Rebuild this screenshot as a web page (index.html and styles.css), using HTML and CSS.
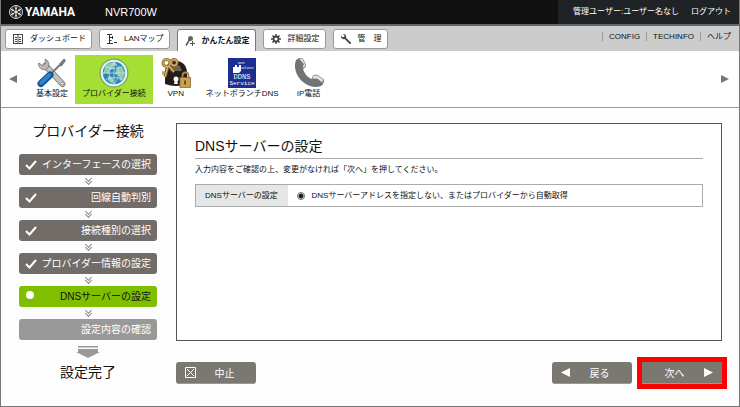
FILE: index.html
```html
<!DOCTYPE html>
<html lang="ja">
<head>
  <meta charset="UTF-8">
  <meta name="viewport" content="width=device-width, initial-scale=1.0">
  <title>NVR700W - プロバイダー接続</title>
  <link rel="stylesheet" href="styles.css">
</head>
<body>

  <!-- ヘッダー -->
  <header class="header">
    <div class="brand">
      <svg class="brand-mark" viewBox="0 0 26 26" fill="none" stroke="#fff">
        <circle cx="13" cy="13" r="12" stroke-width="1.6"/>
        <g stroke-width="1.8">
          <path d="M13 2v22M3.5 7.5l19 11M22.5 7.5l-19 11"/>
          <path d="M10 4.500l3 3 3-3M10 21.500l3-3 3 3M4 11.500l4-1.200-1-4M22 14.500l-4 1.200 1 4M22 11.500l-4-1.200 1-4M4 14.500l4 1.200-1 4" stroke-width="1.4"/>
        </g>
      </svg>
      <span class="brand-name">YAMAHA</span>
      <span class="model">NVR700W</span>
    </div>
    <div class="user">
      <span>管理ユーザー:ユーザー名なし</span>
      <a href="#">ログアウト</a>
    </div>
  </header>

  <!-- タブ -->
  <div class="tabbar">
    <nav class="tabs">
      <a class="tab" href="#">
        <svg viewBox="0 0 10 10" fill="none" stroke="#444"><path d="M0 .5h10M.5 1v8.500M9.500 1v8.500M0 9.500h10M5 1v8"/><path d="M2 3.500h2M2 5.500h2M2 7.500h2M6 3.500h2M6 5.500h2M6 7.500h2"/></svg>
        ダッシュボード
      </a>
      <a class="tab" href="#">
        <svg viewBox="0 0 10 10" fill="none" stroke="#333"><path d="M0 .5h5M2.500 .5v9M0 9.500h6M2.500 3.500h3M2.500 6.500h2M5.500 2v3M7 8.500h3"/></svg>
        LANマップ
      </a>
      <a class="tab active" href="#">
        <svg viewBox="0 0 10 10" fill="none" stroke="#555"><circle cx="5.500" cy="2.500" r="2.500" fill="#666" stroke="none"/><path d="M5 3L1 9.500" stroke-width="1.500"/><path d="M7.500 5v5M5 7.500h5"/></svg>
        かんたん設定
      </a>
      <a class="tab" href="#">
        <svg viewBox="0 0 10 10" fill="none" stroke="#444"><circle cx="5" cy="5" r="2.500" stroke-width="1.800"/><path d="M5 0v2M5 8v2M0 5h2M8 5h2M1.500 1.500l1.400 1.400M7.100 7.100l1.400 1.400M8.500 1.500L7.100 2.900M2.900 7.100L1.500 8.500" stroke-width="1.500"/></svg>
        詳細設定
      </a>
      <a class="tab" href="#">
        <svg viewBox="0 0 10 10" fill="#444"><path d="M1.800 0A2.800 2.800 0 0 1 5 3.700L9.800 8.400a1 1 0 0 1-1.400 1.400L3.700 5A2.800 2.800 0 0 1 0 1.800L1.700 3.300 3.200 2.900 3.500 1.500z"/></svg>
        管　理
      </a>
    </nav>
    <nav class="links">
      <a href="#">CONFIG</a>
      <a href="#">TECHINFO</a>
      <a href="#">ヘルプ</a>
    </nav>
  </div>

  <!-- アイコンメニュー -->
  <nav class="menu">
    <button class="arrow" aria-label="前へ"><svg viewBox="0 0 8 8" fill="#777"><path d="M8 0v8L0 4z"/></svg></button>
    <div class="menu-items">
      <a class="menu-item" href="#">
        <svg viewBox="0 0 30 30">
          <path d="M8.500 7.500L25.500 26" stroke="#777" stroke-width="6" stroke-linecap="round"/>
          <path d="M8.500 7.500L25.500 26" stroke="#c2c2c2" stroke-width="4.400" stroke-linecap="round"/>
          <path d="M1.500 5A6 6 0 0 0 9.500 11.500 6 6 0 0 0 8 1L8.500 5.500 5.500 7.500z" fill="#b8b8b8" stroke="#777" stroke-width=".8"/>
          <circle cx="25" cy="25.500" r="1.400" fill="#fff" stroke="#777" stroke-width=".7"/>
          <path d="M14 15.500L24 6" stroke="#777" stroke-width="2"/>
          <path d="M22 6l5-5.500 2 2L24.500 8.500z" fill="#777"/>
          <path d="M4 25.500l9-8.500" stroke="#174f8d" stroke-width="7" stroke-linecap="round"/>
          <path d="M4 25l8.500-8" stroke="#2b83cf" stroke-width="4" stroke-linecap="round"/>
        </svg>
        基本設定
      </a>
      <a class="menu-item current" href="#">
        <svg viewBox="0 0 30 30">
          <circle cx="15" cy="15" r="14.500" fill="#78a35f"/>
          <circle cx="15" cy="15" r="13.300" fill="#e4f3f4"/>
          <circle cx="15" cy="15" r="11.200" fill="#2d86b8"/>
          <path d="M6 9c2-4 6-5 10-5l2 3-3 1-1 3-3 1-1 4-4-1-2 2zM17 12l3-4 4 2 2 5-2 6-3 2-1-5-4-2zM9 18l4 1 2 3-2 3.500-4-3z" fill="#8fcbb1"/>
          <path d="M15 4v22M4 15h22M6.500 8.500q8.500 4 17 0M6.500 21.500q8.500-4 17 0M15 4q-10 11 0 22M15 4q10 11 0 22" fill="none" stroke="#c5e6ef" stroke-width=".7"/>
        </svg>
        プロバイダー接続
      </a>
      <a class="menu-item" href="#">
        <svg viewBox="0 0 30 30">
          <path d="M4 26V15C4 6 9 3 15 3s11 4 11 12v11q-11 4-22 0z" fill="#241c1b"/>
          <path d="M11 8q4-2 8 0l2 5H9z" fill="#706056"/>
          <circle cx="15" cy="21" r="2.500" fill="#fff"/><path d="M14 22h2l1 4h-4z" fill="#fff"/>
          <g fill="none" stroke="#8a6a2b" stroke-width="3"><circle cx="5.500" cy="5" r="3.500"/><circle cx="13" cy="4.500" r="3"/><path d="M8 8l5 6M7 8L4 19M4 15H1"/></g>
          <g fill="none" stroke="#d3b264" stroke-width="1.300"><circle cx="5.500" cy="5" r="3.500"/><circle cx="13" cy="4.500" r="3"/><path d="M8 8l5 6M7 8L4 19M4 15H1"/></g>
          <path d="M21.500 20v-2.500a3 3 0 0 1 6 0V20" fill="none" stroke="#a98b4c" stroke-width="1.800"/>
          <rect x="19" y="19.500" width="10.500" height="10" fill="#c9a24e" stroke="#8d6b2b" stroke-width=".8"/>
          <path d="M24 22.500v4" stroke="#433017" stroke-width="1.500"/>
        </svg>
        VPN
      </a>
      <a class="menu-item" href="#">
        <svg class="ddns" viewBox="0 0 30 30" fill="#fff">
          <rect x="1" width="28" height="30" fill="#1c2f91"/>
          <path d="M6 9h2V7h2v2h2v-2h2v6l-2 2H6z"/>
          <text x="11" y="6" font-size="4">Net</text>
          <text x="14" y="11" font-size="3">Volante</text>
          <text x="15" y="21" font-size="7" text-anchor="middle">DDNS</text>
          <text x="15" y="27" font-size="6" text-anchor="middle">Service</text>
        </svg>
        ネットボランチDNS
      </a>
      <a class="menu-item" href="#">
        <svg viewBox="0 0 30 30">
          <path d="M2 2C-1 10 3 19 9 24c6 5 13 6 18 4 2-1 3-4 3-6l-7-5c-2 0-4 1-5 4-4-1-8-6-9-10 2-1 3-3 2-5L7 0Q4 0 2 2z" fill="#707476"/>
          <path d="M5 1l3-1 3.500 6-.5 3.500L8 10 9.500 6z" fill="#e4e6e6" stroke="#707476" stroke-width=".7"/>
          <path d="M18 21l1.500-3.500L23 17l6.500 4.500-1 3.500-5-4z" fill="#e4e6e6" stroke="#707476" stroke-width=".7"/>
        </svg>
        IP電話
      </a>
    </div>
    <button class="arrow" aria-label="次へ"><svg viewBox="0 0 8 8" fill="#777"><path d="M0 0v8l8-4z"/></svg></button>
  </nav>

  <div class="content">
    <!-- 手順 -->
    <aside class="side">
      <h2 class="side-title">プロバイダー接続</h2>
      <ol class="steps">
        <li class="step"><svg viewBox="0 0 12 10"><path d="M1 5l3.500 3.500L11 1"/></svg>インターフェースの選択</li>
        <li class="step"><svg viewBox="0 0 12 10"><path d="M1 5l3.500 3.500L11 1"/></svg>回線自動判別</li>
        <li class="step"><svg viewBox="0 0 12 10"><path d="M1 5l3.500 3.500L11 1"/></svg>接続種別の選択</li>
        <li class="step"><svg viewBox="0 0 12 10"><path d="M1 5l3.500 3.500L11 1"/></svg>プロバイダー情報の設定</li>
        <li class="step now"><svg viewBox="0 0 12 14"><path d="M5 9v4" class="pin"/><circle cx="5" cy="5" r="4"/></svg>DNSサーバーの設定</li>
        <li class="step later">設定内容の確認</li>
      </ol>
      <svg class="down" viewBox="0 0 24 12" fill="#999"><path d="M2 0h20v1.500H2zM2 3h20v3h2l-12 6L0 6h2z"/></svg>
      <p class="side-title">設定完了</p>
    </aside>

    <!-- 設定内容 -->
    <main class="main">
      <section class="panel">
        <h1 class="panel-title">DNSサーバーの設定</h1>
        <p class="lead">入力内容をご確認の上、変更がなければ「次へ」を押してください。</p>
        <table class="form">
          <tr>
            <th scope="row">DNSサーバーの設定</th>
            <td>
              <label class="choice">
                <input type="radio" name="dns" checked>
                DNSサーバーアドレスを指定しない、またはプロバイダーから自動取得
              </label>
            </td>
          </tr>
        </table>
      </section>
      <div class="buttons">
        <button class="btn cancel">
          <svg viewBox="0 0 11 11" fill="none" stroke="#fff"><path d="M.5 .5h10v10H.5zM2 2l7 7M9 2L2 9"/></svg>
          <span>中止</span>
        </button>
        <button class="btn">
          <svg viewBox="0 0 9 9" fill="#fff"><path d="M9 0v9L0 4.500z"/></svg>
          <span>戻る</span>
        </button>
        <button class="btn next">
          <span>次へ</span>
          <svg viewBox="0 0 9 9" fill="#fff"><path d="M0 0v9l9-4.500z"/></svg>
        </button>
      </div>
    </main>
  </div>

</body>
</html>
```
FILE: styles.css
```css
* {
  box-sizing: border-box;
}

body {
  margin: 0;
  min-height: 100vh;
  border: 1px solid #777;
  border-top: none;
  background-color: #fdfdfd;
  color: #111;
  font-family: "Liberation Sans", "Noto Sans CJK JP", sans-serif;
  font-size: 8px;
  line-height: 12px;
}

a {
  color: inherit;
  text-decoration: none;
}

h1, h2, p, ol {
  margin: 0;
  padding: 0;
  font-weight: normal;
}

button {
  font-family: inherit;
  border: none;
  cursor: pointer;
}

svg {
  flex: none;
  display: block;
}

/* ヘッダー */
.header {
  display: flex;
  justify-content: space-between;
  height: 26px;
  background-color: #111;
  border-bottom: 2px solid #666;
  color: #fff;
}

.brand {
  display: flex;
  align-items: center;
  padding-left: 8px;
}

.brand-mark {
  width: 14px;
  height: 14px;
}

.brand-name {
  width: 48px;
  margin-left: 2px;
  font-family: "Roboto", "Liberation Sans", sans-serif;
  font-size: 12px;
  font-weight: bold;
}

.model {
  margin-left: 32px;
  font-size: 11px;
}

.user {
  display: flex;
  align-items: center;
  gap: 12px;
  padding: 0 8px 0 15px;
  background-color: #1f2326;
}

/* タブ */
.tabbar {
  display: flex;
  justify-content: space-between;
  height: 25px;
  background-color: #ccc;
}

.tabs {
  display: flex;
  align-items: flex-start;
  gap: 7px;
  padding: 3px 0 0 4px;
}

.tab {
  display: flex;
  align-items: center;
  gap: 7px;
  height: 20px;
  padding: 0 5px 0 7px;
  background-color: #fff;
  border: 1px solid #999;
  border-radius: 3px;
}

.tab svg {
  width: 10px;
  height: 10px;
}

.tab.active {
  height: 22px;
  border-color: #777;
  border-bottom: none;
  border-radius: 3px 3px 0 0;
  font-weight: bold;
}

.links {
  display: flex;
  align-items: center;
  padding: 0 8px 4px 0;
}

.links a {
  padding-left: 6px;
  border-left: 1px solid #999;
  line-height: 9px;
}

.links a + a {
  margin-left: 6px;
}

/* アイコンメニュー */
.menu {
  display: flex;
  align-items: center;
  height: 57px;
  padding: 0 10px 0 8px;
  background-color: #fff;
  border-bottom: 1px solid #999;
}

.arrow {
  padding: 0;
  background: none;
}

.arrow svg {
  width: 8px;
  height: 8px;
}

.menu-items {
  flex: 1;
  display: flex;
  padding-left: 12px;
}

.menu-item {
  display: flex;
  flex-direction: column;
  align-items: center;
  min-width: 46px;
  height: 49px;
  padding: 3px 7px 0;
}

.menu-item svg {
  width: 30px;
  height: 30px;
}

.menu-item.current {
  background-color: #a5df35;
}

.ddns {
  font-family: "Liberation Mono", monospace;
}

/* 手順 */
.content {
  display: flex;
  gap: 19px;
  padding: 15px 17px 0 18px;
}

.side {
  width: 138px;
}

.side-title {
  font-size: 14px;
  line-height: 16px;
  text-align: center;
}

.steps {
  display: flex;
  flex-direction: column;
  gap: 12px;
  margin-top: 15px;
  list-style: none;
}

.step {
  position: relative;
  display: flex;
  align-items: center;
  justify-content: flex-end;
  height: 21px;
  padding: 0 6px;
  background-color: #716c68;
  border-radius: 3px;
  color: #fff;
  font-size: 10px;
}

.step svg {
  width: 12px;
  margin-right: auto;
  fill: none;
  stroke: #fff;
  stroke-width: 2;
}

/* 手順の間の矢印 */
.step + .step::before,
.step + .step::after {
  content: "";
  position: absolute;
  top: -11px;
  left: 67px;
  width: 4px;
  height: 4px;
  border: solid #888;
  border-width: 0 1px 1px 0;
  transform: rotate(45deg);
}

.step + .step::after {
  top: -8px;
}

.step.now {
  background-color: #80bf00;
  color: #111;
}

.step.now circle {
  fill: #fff;
  stroke: none;
}

.step .pin {
  stroke: #a99a50;
  stroke-width: 1;
}

.step.later {
  background-color: #999;
}

.down {
  width: 24px;
  height: 12px;
  margin: 6px auto;
}

/* 設定内容 */
.main {
  flex: 1;
}

.panel {
  min-height: 218px;
  padding: 14px 18px;
  background-color: #fff;
  border: 1px solid #555;
}

.panel-title {
  padding-bottom: 4px;
  border-bottom: 1px solid #aaa;
  font-size: 14px;
  line-height: 16px;
}

.lead {
  margin: 5px 0 8px;
}

.form {
  width: 100%;
  border: 1px solid #aaa;
  border-collapse: collapse;
}

.form th,
.form td {
  height: 22px;
  padding: 0 9px;
  text-align: left;
}

.form th {
  width: 92px;
  background-color: #e6e6e6;
  font-weight: normal;
  white-space: nowrap;
}

.choice {
  display: flex;
  align-items: center;
  gap: 7px;
}

.choice input {
  appearance: none;
  width: 8px;
  height: 8px;
  margin: 0;
  border: 1px solid #777;
  border-radius: 50%;
  background: radial-gradient(#222 0 2px, #fff 3px);
}

.buttons {
  display: flex;
  gap: 10px;
  margin-top: 21px;
}

.btn {
  display: flex;
  align-items: center;
  gap: 6px;
  width: 80px;
  height: 22px;
  padding: 0 9px;
  background-color: #7b7771;
  border-bottom: 1px solid #999;
  border-radius: 3px;
  color: #fff;
  font-size: 10px;
}

.btn span {
  flex: 1;
  text-align: center;
}

.btn svg {
  width: 9px;
  height: 9px;
}

.btn.cancel {
  margin-right: auto;
}

.cancel svg {
  width: 11px;
  height: 11px;
}

.btn.next {
  border-radius: 0;
  outline: 5px solid #f00;
}
```
